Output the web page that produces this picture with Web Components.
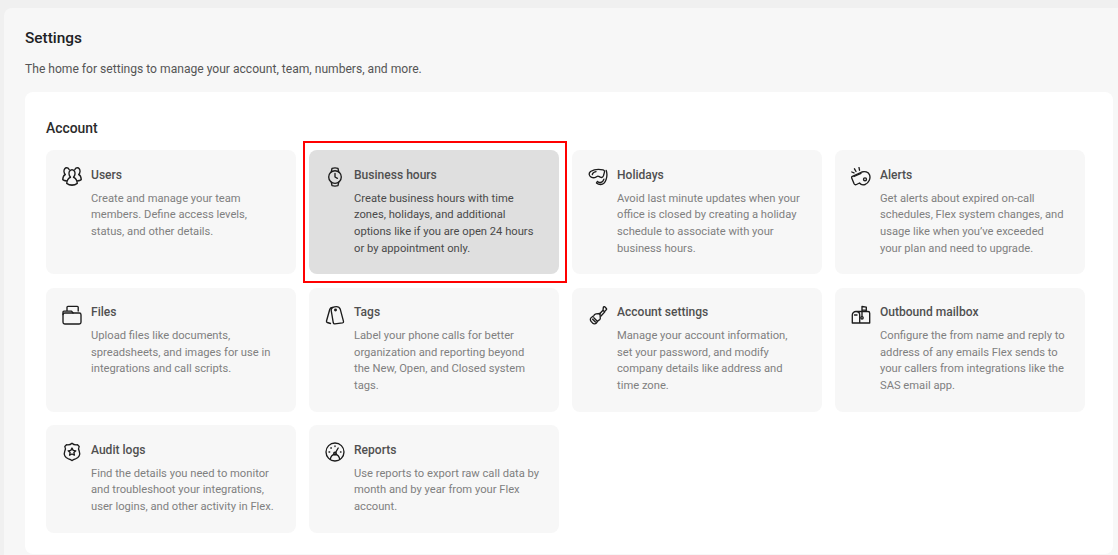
<!DOCTYPE html>
<html><head><meta charset="utf-8">
<style>
html,body{margin:0;height:555px;overflow:hidden;background:#f0f0f0;font-family:Roboto,"Liberation Sans",sans-serif}
</style></head><body>
<template id="t-page"><style>
:host{display:block;margin:8px 0 0 4px;padding:20px 5px 2px 21px;background:#f7f7f7;border-radius:8px 0 0 0;height:525px;box-sizing:content-box}
h1{margin:0;font:500 15.4px/20px Roboto,sans-serif;color:#202124}
p{margin:12px 0 14px;font:400 12.1px/18px Roboto,sans-serif;color:#555}
</style><h1><slot name="title"></slot></h1><p><slot name="sub"></slot></p><slot></slot></template>

<template id="t-section"><style>
:host{display:block;background:#fff;border-radius:8px;padding:27px 28px 21px 21px}
h2{margin:0 0 13px;font:500 13.9px/18px Roboto,sans-serif;color:#2b2b2b}
.g{display:grid;grid-template-columns:repeat(4,250px);column-gap:13px;row-gap:13.2px}
</style><h2><slot name="title"></slot></h2><div class="g"><slot></slot></div></template>

<template id="t-card"><style>
:host{display:flex;position:relative;gap:9px;box-sizing:border-box;padding:16.5px 17px 17px 16px;background:#f7f7f7;border-radius:8px;color:#808080}
:host([active]){background:#dfdfdf;color:#4a4a4a}
:host([active])::after{content:"";position:absolute;inset:-9px -8px -9px -6px;border:2.5px solid #f00;pointer-events:none}
.i{flex:none;width:20px;height:20px;margin-top:-.5px;padding-top:1px}
.b{flex:1;min-width:0}
h3{margin:0 0 8px;font:500 12.05px/16px Roboto,sans-serif;color:#505050}
.d{font:400 11.2px/16.7px Roboto,sans-serif}
</style><div class="i"><slot name="icon"></slot></div><div class="b"><h3></h3><div class="d"><slot></slot></div></div></template>

<template id="t-icon"><style>
:host{display:block;width:20px;height:20px}
svg{display:block;width:20px;height:20px;fill:none;stroke:#1c1c1c;stroke-width:1.35;stroke-linecap:round;stroke-linejoin:round}
</style><svg viewBox="0 0 20 20"></svg></template>

<settings-page>
<span slot="title">Settings</span>
<span slot="sub">The home for settings to manage your account, team, numbers, and more.</span>
<settings-section>
<span slot="title">Account</span>
<settings-card heading="Users"><settings-icon slot="icon" name="users"></settings-icon>Create and manage your team members. Define access levels, status, and other details.</settings-card>
<settings-card heading="Business hours" active><settings-icon slot="icon" name="watch"></settings-icon>Create business hours with time zones, holidays, and additional options like if you are open 24 hours or by appointment only.</settings-card>
<settings-card heading="Holidays"><settings-icon slot="icon" name="snorkel"></settings-icon>Avoid last minute updates when your office is closed by creating a holiday schedule to associate with your business hours.</settings-card>
<settings-card heading="Alerts"><settings-icon slot="icon" name="whistle"></settings-icon>Get alerts about expired on-call schedules, Flex system changes, and usage like when you’ve exceeded your plan and need to upgrade.</settings-card>
<settings-card heading="Files"><settings-icon slot="icon" name="folder"></settings-icon>Upload files like documents, spreadsheets, and images for use in integrations and call scripts.</settings-card>
<settings-card heading="Tags"><settings-icon slot="icon" name="tags"></settings-icon>Label your phone calls for better organization and reporting beyond the New, Open, and Closed system tags.</settings-card>
<settings-card heading="Account settings"><settings-icon slot="icon" name="guitar"></settings-icon>Manage your account information, set your password, and modify company details like address and time zone.</settings-card>
<settings-card heading="Outbound mailbox"><settings-icon slot="icon" name="mailbox"></settings-icon>Configure the from name and reply to address of any emails Flex sends to your callers from integrations like the SAS email app.</settings-card>
<settings-card heading="Audit logs"><settings-icon slot="icon" name="badge"></settings-icon>Find the details you need to monitor and troubleshoot your integrations, user logins, and other activity in Flex.</settings-card>
<settings-card heading="Reports"><settings-icon slot="icon" name="gauge"></settings-icon>Use reports to export raw call data by month and by year from your Flex account.</settings-card>
</settings-section>
</settings-page>

<script>
const ICONS={
users:'<g transform="translate(0 -2.5) scale(1 1.18)"><path d="M10 4.500c-2 0-3.200 1.600-3 3.500.1 1.200.7 2.200 1.500 2.800-2 .7-3.500 2.500-3.800 5.200 1.500 1 3.300 1.500 5.300 1.500s3.800-.5 5.300-1.500c-.3-2.700-1.800-4.500-3.800-5.200.8-.6 1.400-1.600 1.500-2.800.2-1.900-1-3.500-3-3.500z"/><path d="M7.200 4.300C6.600 3.300 5.700 2.800 4.700 2.800 2.900 2.800 1.800 4.300 2 6.100c.1 1 .6 1.900 1.300 2.400C1.900 9.100.9 10.600.7 12.800c.9.600 2.200 1 3.600 1.100"/><path d="M12.800 4.300c.6-1 1.500-1.500 2.500-1.500 1.800 0 2.900 1.500 2.700 3.300-.1 1-.6 1.900-1.300 2.400 1.400.6 2.400 2.100 2.600 4.300-.9.600-2.200 1-3.600 1.100"/></g>',
watch:'<circle cx="10" cy="10" r="6.300"/><path d="M6.300 4.900 7 1.300c2-.5 4-.5 6 0l.7 3.600M6.300 15.100l.7 3.600c2 .5 4 .5 6 0l.7-3.600M10 6.500V10l2.400 1.300"/>',
snorkel:'<path d="M2.500 4.500C5.500 2.700 11 2 15 2.900c1.300.3 1.800 1.200 1.400 2.500l-1 3.500c-.4 1.200-1.300 1.800-2.500 1.500-1.300-.3-2-1.300-3-1.300s-1.800 1.400-3.300 1.600c-2.300.3-5-1-5.400-3.200-.2-1 .4-2.200 1.300-3z"/><path d="M4.300 7.500c.3-1.300 1.800-2.400 3.700-2.800"/><path d="M18.200 3.500c.9 2.400.9 6-.1 9-.9 2.800-2.800 5-5.400 5-1.700 0-3.200-.6-4.200-1.600l1-1.500c.8.800 1.900 1.200 3.100 1.100 1.600-.2 2.700-1.400 3.300-3.400"/>',
whistle:'<path d="M.9 9.700 10.800 5c2.700-1.100 6.700 0 7.800 3 1.200 3.400-.8 8-4.600 9.500-2.200.8-4.200.2-5.500-1.500l-3 1.500c-1 .5-1.900.2-2.400-.8L.7 11c-.2-.4-.2-.9.200-1.300z"/><circle cx="14" cy="12.300" r="1.500"/><path d="M3 9.500 10 6.300M3.500 1.800l1.500 2.700M8 .5l.5 2.700M.8 5l2.200.9"/>',
folder:'<rect x="1" y="8" width="18" height="11" rx="1.800"/><path d="M1 9.500V7c0-.5.400-.9.900-.9H5V2.200c0-.5.400-.9.900-.9h9.400c.5 0 .9.400.9.900v3.900M5 6.100h4.500l1.600 1.900"/>',
tags:'<path d="M7.500 2.500c-1.300 0-2.300.6-2.700 1.700L1.500 16c-.2.800.1 1.300.8 1.500l3.200 1"/><path d="M9.500 1.800c2.700-.6 5 .3 5.800 2.500l3.200 12c.2.800-.2 1.300-1 1.500l-7.700 1c-.8.100-1.300-.3-1.500-1L6.200 5.500C6 3.800 7.500 2.200 9.500 1.800z"/><circle cx="10.500" cy="5" r=".8"/>',
guitar:'<path d="M12 8.500 8 8.800c-1.200.2-1.800.8-2.100 1.700-.3.800-1.200 1-2 1.500-1.900 1.100-2 3-.7 4.500l1.300 1.400c1.400 1.400 3.300 1.300 4.400-.6.500-.8.800-1.500 1.600-1.800.9-.3 1.700-.9 1.800-2L12 8.500z"/><path d="M11.500 9 15 5.200l1.800 1.700L13 11M15 5.200l.4-3c.4-.6 1-.7 1.500-.3l1.500 1.500c.4.500.3 1.100-.3 1.500l-1.800 2"/><path d="m5.800 12.800 3 3M4.600 14.200l2.800 2.800"/>',
mailbox:'<path d="M5 6.500h12c1 0 1.700.8 1.700 1.800V18H1.300V10C1.300 7.900 3 6.500 5 6.500c2.200 0 3.700 1.500 3.700 3.500v8"/><path d="M11 11.500V1.500l4.300.6v3.300L11 4.800"/><circle cx="11" cy="12.800" r="1.200"/><path d="M3.500 10H6"/>',
badge:'<path d="M10 1.200c1.200 1.200 3.300 1.900 5.500 1.500l1.700 1.800c-.9 1.500-.9 3 0 4.600 1.400 3.600-.4 6.900-3.700 7.700-1.400.3-2.700.9-3.500 1.800-.8-.9-2.100-1.500-3.500-1.800-3.300-.8-5.100-4.100-3.700-7.700.9-1.600.9-3.100 0-4.600l1.700-1.800c2.200.4 4.300-.3 5.500-1.500z"/><path d="m10 6 1.200 2.400 2.600.4-1.900 1.800.5 2.600-2.400-1.200-2.400 1.200.5-2.600-1.900-1.800 2.600-.4z"/>',
gauge:'<circle cx="10" cy="10" r="9"/><path d="m10 11.500 3.200-5.500M5.200 17.500c.5-3 2.500-5 4.800-5s4.300 2 4.800 5"/><circle cx="10" cy="11.500" r="1.300"/><path d="M4 10h.7M5.800 6h.6M10 3.800v.7M15.500 10h.5"/>'
};
function def(name,tid,init){customElements.define(name,class extends HTMLElement{
 constructor(){super();const r=this.attachShadow({mode:'open'});r.appendChild(document.getElementById(tid).content.cloneNode(true));}
 connectedCallback(){init&&init(this)}
});}
def('settings-page','t-page');
def('settings-section','t-section');
def('settings-card','t-card',el=>{el.shadowRoot.querySelector('h3').textContent=el.getAttribute('heading')});
def('settings-icon','t-icon',el=>{el.shadowRoot.querySelector('svg').innerHTML=ICONS[el.getAttribute('name')]||''});
</script>
</body></html>
